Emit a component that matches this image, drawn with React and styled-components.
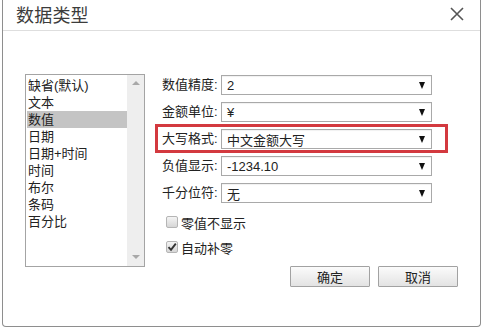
import React, { useState } from "react";
import styled, { createGlobalStyle } from "styled-components";

const GlobalStyle = createGlobalStyle`
  html, body { margin: 0; padding: 0; background: #ffffff; }
  body {
    font-family: "Liberation Sans", "Noto Sans CJK SC", sans-serif;
    color: #222;
  }
`;

const Dialog = styled.div`
  box-sizing: border-box;
  width: 479px;
  height: 327px;
  margin-left: 2px;
  background: #fff;
  border: 1px solid #8e8e8e;
  border-top: none;
  border-radius: 0 0 4px 4px;
  display: flex;
  flex-direction: column;
`;

const Header = styled.div`
  height: 31px;
  box-sizing: border-box;
  border-bottom: 1px solid #dedede;
  display: flex;
  align-items: center;
  justify-content: space-between;
  padding: 0 16px 2px 13px;
`;

const Title = styled.div`
  font-family: "Noto Sans CJK SC", sans-serif;
  font-size: 18px;
  line-height: 20px;
  color: #3c3c3c;
  letter-spacing: 0.2px;
`;

const Close = styled.button`
  border: none;
  background: none;
  padding: 0;
  width: 14px;
  height: 14px;
  display: flex;
  cursor: pointer;
`;

const Body = styled.div`
  display: flex;
  padding: 43px 0 0 22px;
`;

const ListBox = styled.div`
  box-sizing: border-box;
  width: 120px;
  height: 193px;
  border: 1px solid #a4a4a4;
  display: flex;
`;

const Items = styled.div`
  flex: 1;
  padding: 2px 0 0 1px;
`;

const Item = styled.div`
  height: 17px;
  line-height: 17px;
  font-size: 13px;
  padding-left: 1px;
  background: ${(p) => (p.$selected ? "#c4c4c4" : "transparent")};
  white-space: nowrap;
  cursor: default;
`;

const ScrollBar = styled.div`
  width: 17px;
  background: #eeeeee;
  display: flex;
  flex-direction: column;
  justify-content: space-between;
  align-items: center;
  padding: 6px 0 7px;
  box-sizing: border-box;
`;

const ScrollArrow = styled.div`
  width: 0;
  height: 0;
  border-left: 4px solid transparent;
  border-right: 4px solid transparent;
  ${(p) =>
    p.$down
      ? "border-top: 4px solid #a8a8a8;"
      : "border-bottom: 4px solid #a8a8a8;"}
`;

const Form = styled.div`
  display: flex;
  flex-direction: column;
  margin: 1px 0 0 17px;
  width: 296px;
`;

const Row = styled.div`
  position: relative;
  display: flex;
  align-items: center;
  height: 20px;
  margin-bottom: 7px;
  ${(p) =>
    p.$highlight &&
    `
    &::after {
      content: "";
      position: absolute;
      left: -7px;
      right: 10px;
      top: -5px;
      bottom: -4px;
      border: 3px solid #d3393f;
      pointer-events: none;
    }
  `}
`;

const Label = styled.div`
  width: 59px;
  font-size: 13px;
  line-height: 20px;
  white-space: nowrap;
  color: #222;
`;

const Select = styled.div`
  box-sizing: border-box;
  width: 211px;
  height: 20px;
  border: 1px solid #a9a9a9;
  box-shadow: inset 0 1px 1px rgba(0, 0, 0, 0.06);
  display: flex;
  align-items: center;
  justify-content: space-between;
  padding: 0 6px 0 5px;
  font-size: 13px;
  color: #222;
  background: #fff;
`;

const Arrow = styled.span`
  width: 0;
  height: 0;
  border-left: 3.5px solid transparent;
  border-right: 3.5px solid transparent;
  border-top: 7px solid #111;
  margin-top: 1px;
`;

const Check = styled.label`
  display: flex;
  align-items: center;
  height: 18px;
  margin: ${(p) => (p.$first ? "3px" : "7px")} 0 0 4px;
  font-size: 13px;
  color: #222;
  cursor: default;
`;

const Box = styled.span`
  box-sizing: border-box;
  width: 12px;
  height: 12px;
  border: 1px solid #b5b5b5;
  border-radius: 2px;
  background: linear-gradient(#f4f4f4, #d6d6d6);
  margin-right: 3px;
  display: flex;
  align-items: center;
  justify-content: center;
`;

const Buttons = styled.div`
  display: flex;
  justify-content: flex-end;
  gap: 8px;
  margin-top: 10px;
`;

const Button = styled.button`
  box-sizing: border-box;
  width: 80px;
  height: 21px;
  border: 1px solid #a2a2a2;
  border-radius: 1px;
  background: linear-gradient(#fbfbfb, #e3e3e3);
  font-family: "Noto Sans CJK SC", sans-serif;
  font-size: 13px;
  line-height: 17px;
  color: #222;
  padding: 0;
  cursor: pointer;
`;

const types = ["缺省(默认)", "文本", "数值", "日期", "日期+时间", "时间", "布尔", "条码", "百分比"];

const fields = [
  { label: "数值精度:", value: "2" },
  { label: "金额单位:", value: "¥" },
  { label: "大写格式:", value: "中文金额大写", highlight: true },
  { label: "负值显示:", value: "-1234.10" },
  { label: "千分位符:", value: "无" },
];

function CheckMark() {
  return (
    <svg width="10" height="10" viewBox="0 0 10 10">
      <path d="M1.5 5.2 L4 7.8 L8.8 1.6" fill="none" stroke="#333" strokeWidth="1.9" />
    </svg>
  );
}

export default function App() {
  const [selected, setSelected] = useState(2);
  const [zeroHide, setZeroHide] = useState(false);
  const [autoZero, setAutoZero] = useState(true);

  return (
    <>
      <GlobalStyle />
      <Dialog>
        <Header>
          <Title>数据类型</Title>
          <Close aria-label="close">
            <svg width="14" height="14" viewBox="0 0 14 14">
              <path d="M1 1 L13 13 M13 1 L1 13" stroke="#555" strokeWidth="1.6" fill="none" />
            </svg>
          </Close>
        </Header>
        <Body>
          <ListBox>
            <Items>
              {types.map((t, i) => (
                <Item key={t} $selected={i === selected} onClick={() => setSelected(i)}>
                  {t}
                </Item>
              ))}
            </Items>
            <ScrollBar>
              <ScrollArrow />
              <ScrollArrow $down />
            </ScrollBar>
          </ListBox>
          <Form>
            {fields.map((f) => (
              <Row key={f.label} $highlight={f.highlight}>
                <Label>{f.label}</Label>
                <Select>
                  <span>{f.value}</span>
                  <Arrow />
                </Select>
              </Row>
            ))}
            <Check $first onClick={() => setZeroHide(!zeroHide)}>
              <Box>{zeroHide && <CheckMark />}</Box>
              零值不显示
            </Check>
            <Check onClick={() => setAutoZero(!autoZero)}>
              <Box>{autoZero && <CheckMark />}</Box>
              自动补零
            </Check>
            <Buttons>
              <Button>确定</Button>
              <Button>取消</Button>
            </Buttons>
          </Form>
        </Body>
      </Dialog>
    </>
  );
}
